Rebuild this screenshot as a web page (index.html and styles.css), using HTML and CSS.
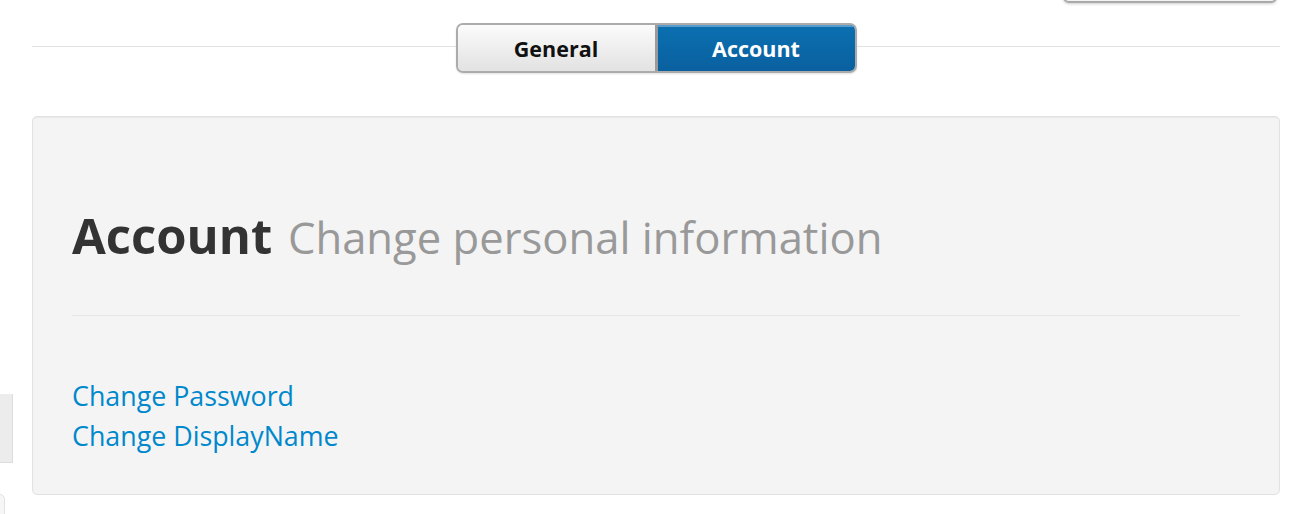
FILE: index.html
```html
<!DOCTYPE html>
<html lang="en">
<head>
    <meta charset="UTF-8">
    <meta name="viewport" content="width=device-width, initial-scale=1.0">
    <title>Settings - Account</title>
    <link rel="stylesheet" href="styles.css">
</head>
<body>
    <div class="top-button"></div>
    <div class="side-panel"></div>
    <div class="side-panel-lower"></div>

    <div class="container">
        <div class="tabs-row">
            <div class="rule"></div>
            <div class="tab-group">
                <a class="tab" href="#general">General</a>
                <a class="tab active" href="#account">Account</a>
            </div>
            <div class="rule"></div>
        </div>

        <div class="well">
            <h1>Account <small>Change personal information</small></h1>
            <hr>
            <ul class="links">
                <li><a href="#password">Change Password</a></li>
                <li><a href="#displayname">Change DisplayName</a></li>
            </ul>
        </div>
    </div>
</body>
</html>
```

FILE: styles.css
```css
body {
    margin: 0;
    font-family: "Open Sans", "DejaVu Sans", sans-serif;
    background: #fff;
    color: #333;
    position: relative;
    min-height: 514px;
    overflow: hidden;
}
.container {
    margin: 0 16px 0 32px;
}
.tabs-row {
    display: flex;
    padding-top: 23px;
}
.rule {
    flex: 1;
    height: 1px;
    margin-top: 23px;
    background: #e2e2e2;
}
.tab-group {
    display: flex;
    border: 2px solid #ababab;
    border-radius: 7px;
    overflow: hidden;
    box-shadow: 0 1px 2px rgba(0,0,0,0.12);
}
.tab {
    width: 197px;
    height: 46px;
    display: flex;
    align-items: center;
    justify-content: center;
    font-size: 21.5px;
    font-weight: bold;
    text-decoration: none;
    color: #111;
    background: linear-gradient(#fbfbfb, #e2e2e2);
}
.tab.active {
    color: #fff;
    background: linear-gradient(#0b70b1, #0a609f);
    border-left: 3px solid #9a9a9a;
    box-shadow: inset 0 2px 0 #5a9ccc;
}
.well {
    margin-top: 43px;
    height: 377px;
    padding: 0 39px;
    background: #f4f4f4;
    border: 1px solid #e2e2e2;
    border-radius: 5px;
    box-shadow: inset 0 1px 1px rgba(0,0,0,0.05);
}
h1 {
    margin: 90px 0 0;
    font-size: 49px;
    line-height: 56px;
    font-weight: bold;
    color: #333;
}
h1 small {
    font-size: 43.6px;
    line-height: 1;
    font-weight: normal;
    color: #999;
    margin-left: 3px;
}
hr {
    margin: 52px 0 0;
    border: none;
    height: 1px;
    background: #e6e6e6;
}
.links {
    list-style: none;
    margin: 60px 0 0;
    padding: 0;
}
.links li {
    font-size: 26.8px;
    line-height: 40px;
}
.links a {
    color: #0088cc;
    text-decoration: none;
}
.top-button {
    position: absolute;
    top: -40px;
    left: 1063px;
    width: 212px;
    height: 40px;
    border: 1px solid #aaa;
    border-bottom-width: 2px;
    border-radius: 0 0 6px 6px;
    background: #f2f2f2;
    box-shadow: 0 1px 3px rgba(0,0,0,0.2);
}
.side-panel {
    position: absolute;
    top: 394px;
    left: 0;
    width: 12px;
    height: 68px;
    background: #ececec;
    border-right: 1px solid #ddd;
    border-bottom: 1px solid #ddd;
}
.side-panel-lower {
    position: absolute;
    top: 494px;
    left: -10px;
    width: 13px;
    height: 40px;
    border: 1px solid #e2e2e2;
    border-radius: 5px;
    background: #f6f6f6;
}
```
